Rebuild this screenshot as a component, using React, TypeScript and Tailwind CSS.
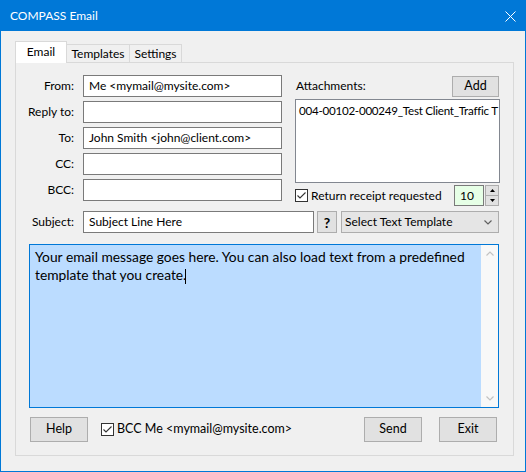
import React from 'react';

const font = "font-['Lato','Noto_Sans',sans-serif]";

const Check: React.FC = () => (
  <svg width="13" height="13" viewBox="0 0 13 13" className="shrink-0">
    <rect x="0.5" y="0.5" width="12" height="12" fill="#ffffff" stroke="#333333" />
    <path d="M2.5 6.5 L5 9 L10.5 3.5" fill="none" stroke="#333333" strokeWidth="1.1" />
  </svg>
);

const Chevron: React.FC<{ up?: boolean; color: string }> = ({ up, color }) => (
  <svg width="8" height="5" viewBox="0 0 8 5">
    <path d={up ? 'M0.5 4.5 L4 1 L7.5 4.5' : 'M0.5 0.5 L4 4 L7.5 0.5'} fill="none" stroke={color} strokeWidth="1.2" />
  </svg>
);

const fields = [
  { label: 'From:', value: 'Me <mymail@mysite.com>' },
  { label: 'Reply to:', value: '' },
  { label: 'To:', value: 'John Smith <john@client.com>' },
  { label: 'CC:', value: '' },
  { label: 'BCC:', value: '' },
];

const Button: React.FC<{ children: React.ReactNode; className?: string }> = ({ children, className }) => (
  <div className={`flex items-center justify-center bg-[#e1e1e1] border border-[#adadad] text-black ${className ?? ''}`}>
    {children}
  </div>
);

export default function App() {
  return (
    <div className={`w-[526px] h-[472px] flex flex-col border border-[#0078d7] bg-[#f0f0f0] text-[12px] text-black ${font}`}>
      {/* title bar */}
      <div className="h-[30px] shrink-0 bg-[#0078d7] flex items-center justify-between pl-[9px] pr-[9px] text-white">
        <span className="text-[12px]">COMPASS Email</span>
        <svg width="11" height="11" viewBox="0 0 11 11">
          <path d="M0.5 0.5 L10.5 10.5 M10.5 0.5 L0.5 10.5" stroke="#ffffff" strokeWidth="1" />
        </svg>
      </div>

      <div className="flex-1 pt-[10px] pl-[14px]">
        {/* tabs */}
        <div className="h-[21px] flex items-end">
          <div className="relative z-10 -mb-px h-[22px] w-[52px] bg-white border border-b-0 border-[#d9d9d9] flex items-center justify-center pb-[1px]">
            Email
          </div>
          <div className="h-[18px] w-[63px] border-t border-r border-[#d9d9d9] flex items-center justify-center">
            Templates
          </div>
          <div className="h-[18px] w-[52px] border-t border-r border-[#d9d9d9] flex items-center justify-center">
            Settings
          </div>
        </div>

        {/* tab page */}
        <div className="w-[499px] h-[394px] border border-[#d9d9d9] pt-[12px] flex flex-col">
          <div className="flex">
            <div className="flex flex-col gap-[4px]">
              {fields.map((f) => (
                <div key={f.label} className="flex items-center h-[22px]">
                  <span className="w-[58px] text-right">{f.label}</span>
                  <div className="ml-[9px] w-[199px] h-[22px] bg-white border border-[#7a7a7a] flex items-center pl-[5px] whitespace-nowrap overflow-hidden">
                    {f.value}
                  </div>
                </div>
              ))}
            </div>

            <div className="ml-[13px] w-[205px] flex flex-col">
              <div className="h-[22px] flex items-center justify-between pr-[1px]">
                <span className="pl-[1px]">Attachments:</span>
                <Button className="w-[47px] h-[21px] text-[12.5px]">Add</Button>
              </div>
              <div className="mt-[2px] h-[84px] bg-white border border-[#828790] pl-[3px] pt-[2px] whitespace-nowrap overflow-hidden text-[11.6px] tracking-[-0.25px]">
                004-00102-000249_Test Client_Traffic T
              </div>
              <div className="mt-[2px] h-[21px] flex items-center pr-[1px]">
                <Check />
                <span className="ml-[3px]">Return receipt requested</span>
                <div className="ml-auto w-[30px] h-[21px] bg-[#e6ffe6] border border-[#7a7a7a] flex items-center pl-[5px]">
                  10
                </div>
                <div className="ml-[1px] w-[14px] h-[21px] flex flex-col border border-[#adadad] bg-[#e1e1e1]">
                  <div className="flex-1 flex items-center justify-center border-b border-[#adadad]">
                    <svg width="5" height="3" viewBox="0 0 5 3"><path d="M0 3 L2.5 0 L5 3 Z" fill="#000" /></svg>
                  </div>
                  <div className="flex-1 flex items-center justify-center">
                    <svg width="5" height="3" viewBox="0 0 5 3"><path d="M0 0 L2.5 3 L5 0 Z" fill="#000" /></svg>
                  </div>
                </div>
              </div>
            </div>
          </div>

          {/* subject */}
          <div className="mt-[5px] flex items-center h-[22px]">
            <span className="w-[58px] text-right">Subject:</span>
            <div className="ml-[9px] w-[231px] h-[22px] bg-white border border-[#7a7a7a] flex items-center pl-[5px]">
              Subject Line Here
            </div>
            <Button className="ml-[3px] w-[20px] h-[22px] font-bold text-[14px]">?</Button>
            <div className="ml-[4px] w-[158px] h-[22px] bg-[#e5e5e5] border border-[#adadad] flex items-center justify-between pl-[3px] pr-[6px]">
              <span>Select Text Template</span>
              <Chevron color="#606060" />
            </div>
          </div>

          {/* message */}
          <div className="mt-[11px] ml-[13px] w-[470px] h-[164px] border border-[#0078d7] bg-[#bbdcff] flex">
            <div className="flex-1 pl-[5px] pt-[3px] text-[13.8px] leading-[18px]">
              Your email message goes here. You can also load text from a predefined template that you create.
              <span className="inline-block w-px h-[15px] bg-black align-middle -ml-px" />
            </div>
            <div className="w-[17px] bg-[#f8f8f8] flex flex-col justify-between items-center py-[6px]">
              <Chevron up color="#c2c2c2" />
              <Chevron color="#c2c2c2" />
            </div>
          </div>

          {/* bottom buttons */}
          <div className="mt-[9px] w-[482px] h-[25px] flex items-center pr-[1px] text-[12.5px]">
            <Button className="ml-[14px] w-[58px] h-[25px]">Help</Button>
            <div className="ml-[13px]">
              <Check />
            </div>
            <span className="ml-[3px]">BCC Me &lt;mymail@mysite.com&gt;</span>
            <Button className="ml-auto w-[58px] h-[25px]">Send</Button>
            <Button className="ml-[17px] w-[58px] h-[25px]">Exit</Button>
          </div>
        </div>
      </div>
    </div>
  );
}
